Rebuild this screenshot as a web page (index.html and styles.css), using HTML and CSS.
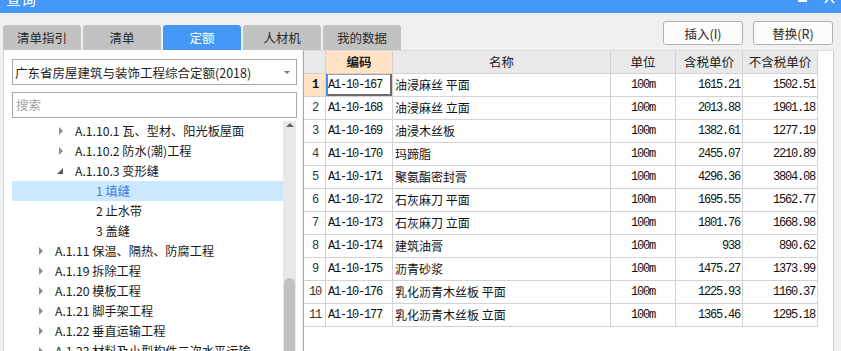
FILE: index.html
```html
<!DOCTYPE html>
<html lang="zh-CN">
<head>
<meta charset="utf-8">
<title>查询</title>
<link rel="stylesheet" href="styles.css">
</head>
<body>
<div class="titlebar">
  <span class="title">查询</span>
  <svg class="winctl" width="44" height="13" viewBox="0 0 44 13">
    <rect x="6" y="0" width="9" height="2" fill="#fff"/>
    <path d="M33 -8 L42 3 M42 -8 L33 3" stroke="#fff" stroke-width="1.6" fill="none"/>
  </svg>
</div>
<div class="toolbar">
  <div class="tabs">
    <div class="tab">清单指引</div>
    <div class="tab">清单</div>
    <div class="tab on">定额</div>
    <div class="tab">人材机</div>
    <div class="tab">我的数据</div>
  </div>
  <div class="btns">
    <button class="btn">插入(I)</button>
    <button class="btn">替换(R)</button>
  </div>
</div>
<div class="main">
  <div class="left">
    <div class="select"><span class="seltext">广东省房屋建筑与装饰工程综合定额(2018)</span><i class="caret"></i></div>
    <div class="search">搜索</div>
    <div class="treewrap">
      <div class="tree">
        <div class="row lv2"><i class="arr"></i><span>A.1.10.1 瓦、型材、阳光板屋面</span></div>
        <div class="row lv2"><i class="arr"></i><span>A.1.10.2 防水(潮)工程</span></div>
        <div class="row lv2"><i class="arr open"></i><span>A.1.10.3 变形缝</span></div>
        <div class="row lv3 sel"><span>1 填缝</span></div>
        <div class="row lv3"><span>2 止水带</span></div>
        <div class="row lv3"><span>3 盖缝</span></div>
        <div class="row lv1"><i class="arr"></i><span>A.1.11 保温、隔热、防腐工程</span></div>
        <div class="row lv1"><i class="arr"></i><span>A.1.19 拆除工程</span></div>
        <div class="row lv1"><i class="arr"></i><span>A.1.20 模板工程</span></div>
        <div class="row lv1"><i class="arr"></i><span>A.1.21 脚手架工程</span></div>
        <div class="row lv1"><i class="arr"></i><span>A.1.22 垂直运输工程</span></div>
        <div class="row lv1"><i class="arr"></i><span>A.1.23 材料及小型构件二次水平运输</span></div>
      </div>
      <div class="vscroll"><div class="up"></div><div class="thumb"></div></div>
    </div>
  </div>
  <div class="right">
    <div class="grid">
      <div class="h rn"></div><div class="h hcode">编码</div><div class="h">名称</div><div class="h">单位</div><div class="h">含税单价</div><div class="h">不含税单价</div>

      <div class="c rn cur">1</div><div class="c code active">A1-10-167</div><div class="c name">油浸麻丝 平面</div><div class="c unit">100m</div><div class="c price">1615.21</div><div class="c price">1502.51</div>
      <div class="c rn">2</div><div class="c code">A1-10-168</div><div class="c name">油浸麻丝 立面</div><div class="c unit">100m</div><div class="c price">2013.88</div><div class="c price">1901.18</div>
      <div class="c rn">3</div><div class="c code">A1-10-169</div><div class="c name">油浸木丝板</div><div class="c unit">100m</div><div class="c price">1382.61</div><div class="c price">1277.19</div>
      <div class="c rn">4</div><div class="c code">A1-10-170</div><div class="c name">玛蹄脂</div><div class="c unit">100m</div><div class="c price">2455.07</div><div class="c price">2210.89</div>
      <div class="c rn">5</div><div class="c code">A1-10-171</div><div class="c name">聚氨酯密封膏</div><div class="c unit">100m</div><div class="c price">4296.36</div><div class="c price">3804.08</div>
      <div class="c rn">6</div><div class="c code">A1-10-172</div><div class="c name">石灰麻刀 平面</div><div class="c unit">100m</div><div class="c price">1695.55</div><div class="c price">1562.77</div>
      <div class="c rn">7</div><div class="c code">A1-10-173</div><div class="c name">石灰麻刀 立面</div><div class="c unit">100m</div><div class="c price">1801.76</div><div class="c price">1668.98</div>
      <div class="c rn">8</div><div class="c code">A1-10-174</div><div class="c name">建筑油膏</div><div class="c unit">100m</div><div class="c price">938</div><div class="c price">890.62</div>
      <div class="c rn">9</div><div class="c code">A1-10-175</div><div class="c name">沥青砂浆</div><div class="c unit">100m</div><div class="c price">1475.27</div><div class="c price">1373.99</div>
      <div class="c rn">10</div><div class="c code">A1-10-176</div><div class="c name">乳化沥青木丝板 平面</div><div class="c unit">100m</div><div class="c price">1225.93</div><div class="c price">1160.37</div>
      <div class="c rn">11</div><div class="c code">A1-10-177</div><div class="c name">乳化沥青木丝板 立面</div><div class="c unit">100m</div><div class="c price">1365.46</div><div class="c price">1295.18</div>
    </div>
  </div>
</div>
</body>
</html>
```

FILE: styles.css
```css
* { box-sizing: border-box; margin: 0; padding: 0; }
html, body { width: 841px; height: 351px; overflow: hidden; }
body {
  background: #f0f0f0;
  font-family: "Noto Sans CJK SC", "Microsoft YaHei", sans-serif;
  font-size: 12px;
  color: #333;
}

/* title bar */
.titlebar { height: 13px; background: #4398f8; display: flex; overflow: hidden; }
.title { color: #fff; font-size: 15px; line-height: 15px; margin-top: -9px; padding-left: 6px; }
.winctl { margin-left: auto; margin-right: 5px; }

/* toolbar */
.toolbar { height: 37px; display: flex; justify-content: space-between; }
.tabs { display: flex; gap: 2px; align-self: flex-end; padding-left: 3px; }
.tab {
  width: 78px; height: 25px; background: #c2c2c2; border-radius: 3px 3px 0 0;
  text-align: center; line-height: 25px; font-size: 12.5px; color: #2a2a2a;
}
.tab.on { background: #4499f8; color: #fff; }
.btns { display: flex; gap: 10px; padding-top: 8px; padding-right: 8px; }
.btn {
  width: 80px; height: 24px; background: #fcfcfc; border: 1px solid #b0b0b0; border-radius: 3px;
  font-family: inherit; font-size: 12.5px; color: #2a2a2a;
}

/* main */
.main { display: flex; height: 301px; }
.left {
  width: 299px; margin-left: 3px; background: #fff; border-left: 1px solid #d4d4d4;
  padding: 9px 5px 0 8px; display: flex; flex-direction: column;
}
.select {
  height: 26px; border: 1px solid #a9a9a9; display: flex; align-items: center;
  padding-left: 2px; color: #1e1e1e; font-size: 12.5px;
}
.seltext { flex: 1; white-space: nowrap; }
.caret {
  width: 0; height: 0; margin-right: 6px;
  border-left: 3px solid transparent; border-right: 3px solid transparent; border-top: 3px solid #777;
}
.search { margin-top: 7px; height: 26px; border: 1px solid #a9a9a9; color: #a3a3a3; padding-left: 3px; line-height: 24px; font-size: 12.5px; }
.treewrap { margin-top: 3px; display: flex; flex: 1; min-height: 0; }
.tree { width: 271px; overflow: hidden; }
.row { height: 20px; display: flex; align-items: center; white-space: nowrap; color: #1a1a1a; font-size: 12.2px; }
.row.lv1 { padding-left: 27px; }
.row.lv2 { padding-left: 47px; }
.row.lv3 { padding-left: 84px; }
.row.sel { background: #cce8ff; color: #3a80dc; }
.arr {
  width: 16px; height: 8px; position: relative; flex: none;
}
.arr::before {
  content: ""; position: absolute; left: 0; top: 0; width: 0; height: 0;
  border-left: 4px solid #8e8e8e; border-top: 4px solid transparent; border-bottom: 4px solid transparent;
}
.arr.open::before {
  left: -2px; top: 1px;
  border-left: 0; border-bottom: 0; border-top: 6px solid transparent; border-right: 6px solid #5a5a5a;
}
.vscroll { width: 13px; background: #e8e8e8; display: flex; flex-direction: column; align-items: center; }
.up {
  margin-top: 2px; width: 0; height: 0;
  border-left: 4px solid transparent; border-right: 4px solid transparent; border-bottom: 4px solid #666;
}
.thumb { margin-top: 151px; width: 11px; flex: 1; background: #c1c1c1; border-radius: 6px 6px 0 0; }

/* right table panel */
.right {
  width: 531px; margin-left: 1px; background: #fff;
  border-left: 1px solid #a9a9a9; border-right: 1px solid #cfcfcf; border-top: 1px solid #dcdcdc;
}
.grid {
  display: grid;
  grid-template-columns: 22px 67px 218px 65px 67px 75px;
  grid-auto-rows: 23px;
  width: 514px;
}
.h, .c { border-right: 1px solid #d3d3d3; border-bottom: 1px solid #d3d3d3; white-space: nowrap; overflow: hidden; }
.h {
  background: #e9e9e9; text-align: center; line-height: 22px; font-size: 12.5px; color: #222;
}
.h.hcode { background: #ffe3c4; font-weight: bold; color: #1a1a1a; }
.c { line-height: 22px; font-size: 12px; color: #111; }
.rn, .code, .unit, .price { font-family: "Liberation Mono", monospace; letter-spacing: -1.2px; }
.c.rn { text-align: center; color: #333; padding-left: 1px; }
.c.rn.cur { background: #ffe3c4; font-weight: bold; color: #111; }
.code { padding-left: 2px; }
.code.active { box-shadow: inset 2px 0 #3d8ef0, inset -2px -2px #6c6c6c, inset 0 1px #a0a0a0; }
.name { padding-left: 2px; font-family: "Noto Sans CJK SC", sans-serif; }
.unit { text-align: center; }
.price { text-align: right; padding-right: 2px; }
```
